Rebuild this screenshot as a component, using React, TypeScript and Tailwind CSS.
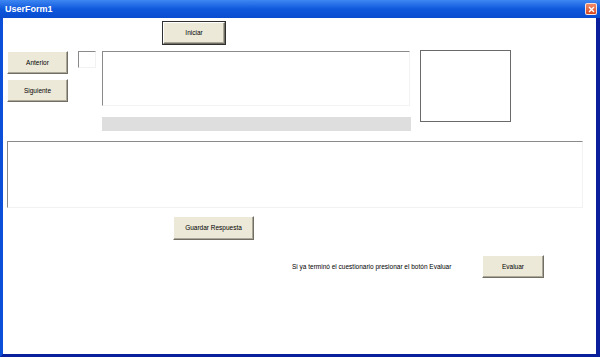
const btn =
  "flex items-center justify-center bg-[#ECE9D8] border border-t-white border-l-white border-r-[#716F64] border-b-[#716F64] shadow-[inset_-1px_-1px_0_#ACA899] text-[6.5px] text-black";
const sunken =
  "bg-white border border-t-[#8a8a8a] border-l-[#8a8a8a] border-r-[#f2f2f2] border-b-[#f2f2f2]";

export default function App() {
  return (
    <div
      className="flex h-[357px] w-[600px] flex-col overflow-hidden bg-[#0a4fd6]"
      style={{ fontFamily: '"Liberation Sans", Arial, sans-serif' }}
    >
      {/* title bar */}
      <div className="flex h-[18px] items-center justify-between bg-gradient-to-b from-[#3d86f2] via-[#0e58dc] to-[#0a4cd0] pl-[5px] pr-[3px]">
        <span className="text-[9px] font-bold leading-none text-white">UserForm1</span>
        <div className="flex h-[12px] w-[12px] items-center justify-center rounded-[2px] border border-white/80 bg-gradient-to-b from-[#f08a68] to-[#d6461f]">
          <svg width="7" height="7" viewBox="0 0 7 7">
            <path d="M1 1 L6 6 M6 1 L1 6" stroke="white" strokeWidth="1.4" />
          </svg>
        </div>
      </div>

      {/* client area */}
      <div className="flex-1 border-b-[3px] border-l-[3px] border-r-[4px] border-b-[#0a1f9c] border-l-[#0b4fd8] border-r-[#0a1f9c] bg-white pt-[4px]">
        <button className={`${btn} ml-[160px] h-[22px] w-[62px] outline outline-1 outline-[#303030]`}>
          Iniciar
        </button>

        <div className="mt-[6px] flex items-start pl-[4px]">
          <div className="mt-[1px] flex flex-col gap-[5px]">
            <button className={`${btn} h-[23px] w-[61px]`}>Anterior</button>
            <button className={`${btn} h-[23px] w-[61px]`}>Siguiente</button>
          </div>
          <div className={`${sunken} ml-[10px] mt-[1px] h-[17px] w-[18px]`} />
          <div className="ml-[6px] mt-[1px] flex flex-col">
            <div className={`${sunken} h-[55px] w-[308px]`} />
            <div className="mt-[11px] h-[14px] w-[309px] bg-[#dedede]" />
          </div>
          <div className="ml-[9px] h-[72px] w-[91px] border border-[#6a6a6a] bg-white" />
        </div>

        <div className={`${sunken} ml-[4px] mt-[10px] h-[67px] w-[576px]`} />

        <button className={`${btn} ml-[170px] mt-[8px] h-[24px] w-[81px]`}>Guardar Respuesta</button>

        <div className="mt-[15px] flex items-center pl-[289px]">
          <span className="w-[190px] whitespace-nowrap text-[6.5px] text-black">
            Si ya terminó el cuestionario presionar el botón Evaluar
          </span>
          <button className={`${btn} h-[23px] w-[62px]`}>Evaluar</button>
        </div>
      </div>
    </div>
  );
}
